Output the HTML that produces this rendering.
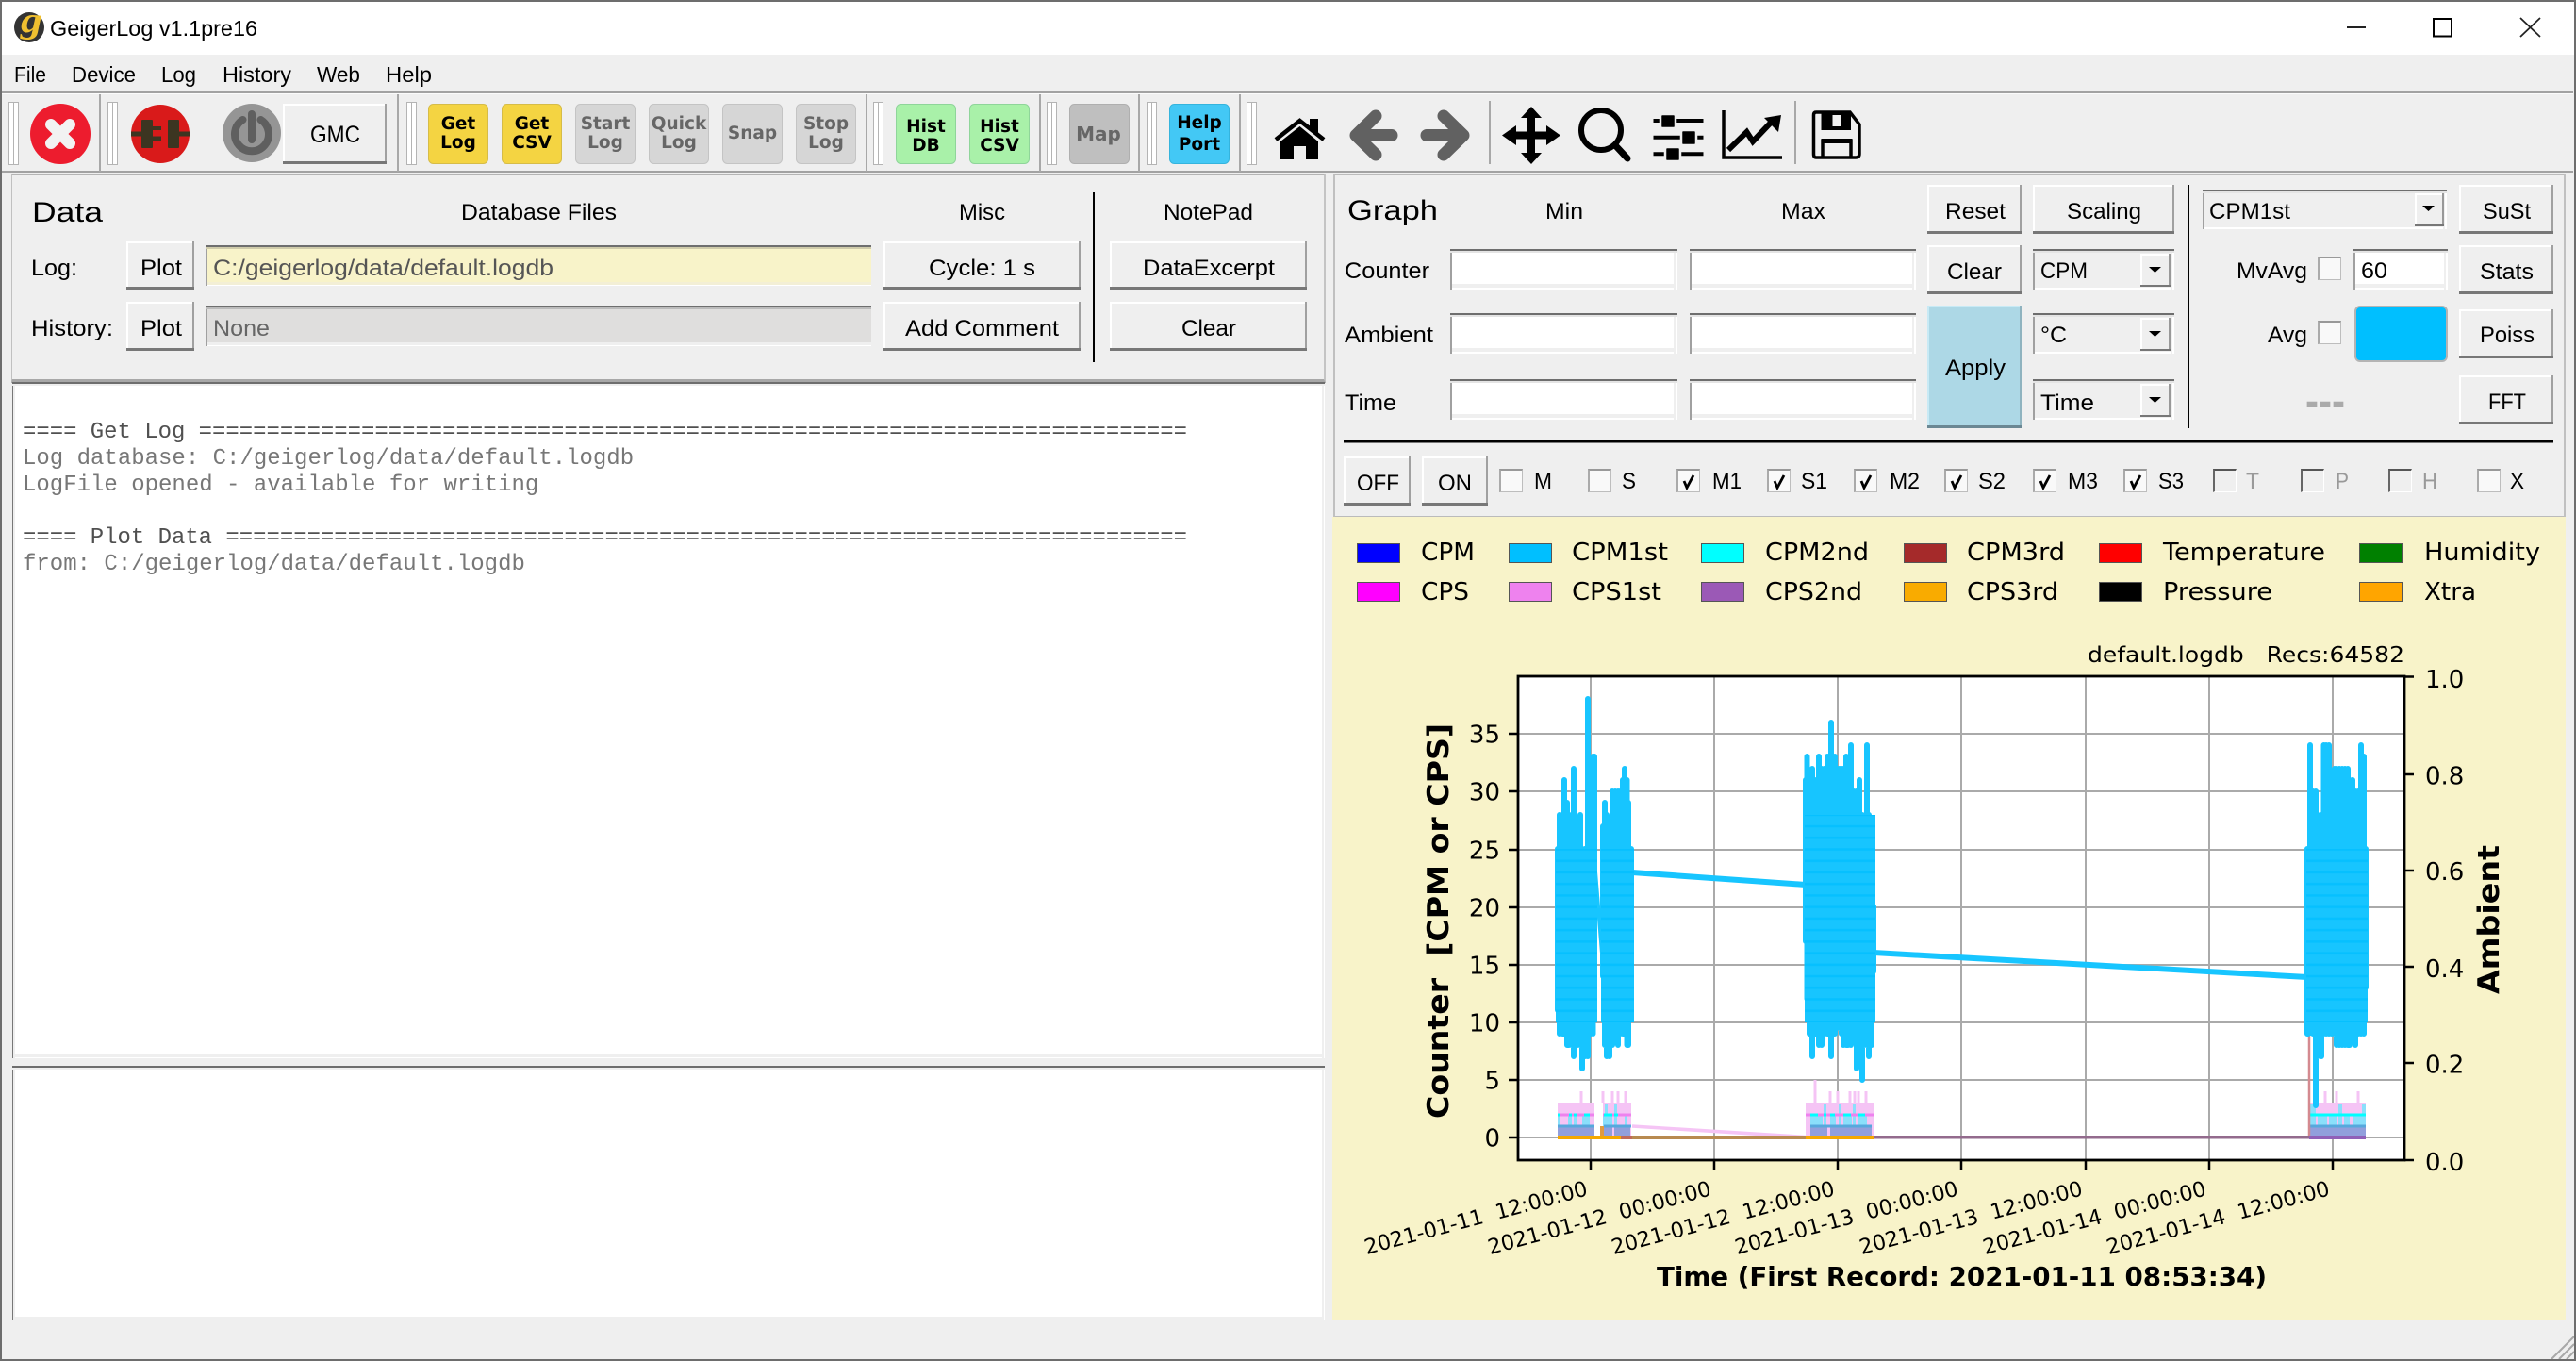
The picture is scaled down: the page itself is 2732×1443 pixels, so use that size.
<!DOCTYPE html>
<html><head><meta charset="utf-8"><title>GeigerLog v1.1pre16</title>
<style>
html,body{margin:0;padding:0;width:2732px;height:1443px;overflow:hidden;background:#efefef}
div{position:absolute;box-sizing:border-box}
.b{background:#efefef;box-shadow:inset 0 -3px 0 #777,inset -2px 0 0 #a0a0a0,inset 0 2px 0 #fff,inset 2px 0 0 #fff}
.i{background:#fff;box-shadow:inset 0 2px 0 #6e6e6e,inset 0 4px 0 #e4e4e4,inset 2px 0 0 #a0a0a0,inset -2px 0 0 #fff,inset -4px 0 0 #efefef,inset 0 -2px 0 #fff,inset 0 -6px 0 #efefef}
.k{background:#efefef}
.a{background:#efefef;box-shadow:inset 0 -2px 0 #777,inset -2px 0 0 #999,inset 0 2px 0 #fff,inset 2px 0 0 #fff}
.c{width:25px;height:25px;background:#f9f9f9;border:1px solid #bdbdbd;border-top:2px solid #999;border-left:2px solid #aaa}
.d{width:25px;height:25px;background:#efefef;border-top:2px solid #555;border-left:2px solid #666;border-right:1px solid #fff;border-bottom:1px solid #fff}
svg{position:absolute;left:0;top:0}
text{white-space:pre;font-family:"Liberation Sans",sans-serif;font-size:24px;fill:#000}
.m{font-family:"Liberation Mono",monospace;fill:#777}
.h{font-family:"Liberation Mono",monospace;fill:#505050}
.v{font-family:"DejaVu Sans",sans-serif;font-size:26px}
.w{font-family:"DejaVu Sans",sans-serif;font-weight:bold;font-size:18.5px;text-anchor:middle}
.g{fill:#666}
</style></head><body>

<!-- title bar -->
<div style="left:0;top:0;width:2732px;height:58px;background:#fff"></div>
<div style="left:0;top:97px;width:2729px;height:2px;background:#a2a2a2"></div>
<div style="left:0;top:99px;width:2729px;height:1px;background:#fbfbfb"></div>
<div style="left:0;top:181px;width:2729px;height:2px;background:#a2a2a2"></div>
<div class="b" style="left:300px;top:110px;width:110px;height:64px"></div>

<!-- data panel -->
<div style="left:12px;top:184px;width:1394px;height:222px;background:#efefef;border-top:2px solid #b4b4b4;border-left:1px solid #c0c0c0;border-right:2px solid #c4c4c4;border-bottom:4px solid #a8a8a8"></div>
<div class="b" style="left:134px;top:256px;width:72px;height:51px"></div>
<div class="b" style="left:134px;top:320px;width:72px;height:52px"></div>
<div class="i" style="left:218px;top:260px;width:706px;height:43px;background:#f8f3c9;box-shadow:inset 0 2px 0 #6e6e6e,inset 0 4px 0 #cfcbaa,inset 2px 0 0 #a0a0a0,inset 0 -1px 0 #fff,inset 0 -4px 0 #f3efd6"></div>
<div class="i" style="left:218px;top:324px;width:706px;height:43px;background:#dfdedd;box-shadow:inset 0 2px 0 #6e6e6e,inset 0 4px 0 #bbb,inset 2px 0 0 #a0a0a0,inset 0 -1px 0 #fff,inset 0 -4px 0 #efefef"></div>
<div class="b" style="left:937px;top:256px;width:209px;height:51px"></div>
<div class="b" style="left:937px;top:320px;width:209px;height:52px"></div>
<div class="b" style="left:1177px;top:256px;width:209px;height:51px"></div>
<div class="b" style="left:1177px;top:320px;width:209px;height:52px"></div>
<div style="left:1159px;top:204px;width:2px;height:180px;background:#000"></div>

<!-- log box -->
<div style="left:13px;top:405px;width:1392px;height:717px;background:#fff;box-shadow:inset 0 2px 0 #6e6e6e,inset 0 4px 0 #efefef,inset 1px 0 0 #777,inset 3px 0 0 #efefef,inset -1px 0 0 #fff,inset -3px 0 0 #efefef,inset 0 -1px 0 #fff,inset 0 -4px 0 #efefef"></div>
<!-- notepad -->
<div style="left:13px;top:1130px;width:1392px;height:270px;background:#fff;box-shadow:inset 0 2px 0 #6e6e6e,inset 0 4px 0 #efefef,inset 1px 0 0 #777,inset 3px 0 0 #efefef,inset -1px 0 0 #fff,inset -3px 0 0 #efefef,inset 0 -1px 0 #fff,inset 0 -4px 0 #efefef"></div>

<!-- graph panel -->
<div style="left:1414px;top:184px;width:1307px;height:365px;background:#efefef;border-top:2px solid #bbb;border-left:2px solid #c0c0c0;border-right:2px solid #c0c0c0;border-bottom:2px solid #bbb"></div>
<div class="b" style="left:2044px;top:196px;width:100px;height:52px"></div>
<div class="b" style="left:2156px;top:196px;width:150px;height:52px"></div>
<div class="b" style="left:2608px;top:196px;width:100px;height:52px"></div>
<div class="b" style="left:2044px;top:260px;width:100px;height:52px"></div>
<div class="b" style="left:2608px;top:260px;width:100px;height:52px"></div>
<div class="b" style="left:2044px;top:324px;width:100px;height:130px;background:#add8e6;box-shadow:inset 0 -3px 0 #6b8894,inset -2px 0 0 #8fb3bf,inset 0 2px 0 #c8eaf5,inset 2px 0 0 #c8eaf5"></div>
<div class="b" style="left:2608px;top:328px;width:100px;height:52px"></div>
<div class="b" style="left:2608px;top:398px;width:100px;height:52px"></div>
<div class="b" style="left:1425px;top:484px;width:71px;height:52px"></div>
<div class="b" style="left:1508px;top:484px;width:70px;height:52px"></div>

<div class="i" style="left:1538px;top:264px;width:241px;height:43px"></div>
<div class="i" style="left:1792px;top:264px;width:240px;height:43px"></div>
<div class="i" style="left:1538px;top:332px;width:241px;height:43px"></div>
<div class="i" style="left:1792px;top:332px;width:240px;height:43px"></div>
<div class="i" style="left:1538px;top:402px;width:241px;height:43px"></div>
<div class="i" style="left:1792px;top:402px;width:240px;height:43px"></div>
<div class="i" style="left:2496px;top:264px;width:100px;height:43px"></div>

<div class="i k" style="left:2336px;top:201px;width:259px;height:42px"></div>
<div class="i k" style="left:2156px;top:264px;width:150px;height:43px"></div>
<div class="i k" style="left:2156px;top:332px;width:150px;height:43px"></div>
<div class="i k" style="left:2156px;top:402px;width:150px;height:43px"></div>
<div class="a" style="left:2561px;top:205px;width:31px;height:35px"></div>
<div class="a" style="left:2270px;top:269px;width:32px;height:35px"></div>
<div class="a" style="left:2270px;top:337px;width:32px;height:35px"></div>
<div class="a" style="left:2270px;top:407px;width:32px;height:35px"></div>

<div class="c" style="left:2458px;top:272px"></div>
<div class="c" style="left:2458px;top:340px"></div>
<div style="left:2497px;top:324px;width:99px;height:60px;background:#00bfff;border:2px solid #b4b4b4;border-radius:6px"></div>

<div class="c" style="left:1590px;top:497px"></div>
<div class="c" style="left:1684px;top:497px"></div>
<div class="c" style="left:1778px;top:497px"></div>
<div class="c" style="left:1874px;top:497px"></div>
<div class="c" style="left:1966px;top:497px"></div>
<div class="c" style="left:2062px;top:497px"></div>
<div class="c" style="left:2156px;top:497px"></div>
<div class="c" style="left:2252px;top:497px"></div>
<div class="d" style="left:2347px;top:497px"></div>
<div class="d" style="left:2440px;top:497px"></div>
<div class="d" style="left:2533px;top:497px"></div>
<div class="c" style="left:2627px;top:497px"></div>

<!-- yellow plot area -->
<div style="left:1413px;top:548px;width:1308px;height:851px;background:#f8f3c9"></div>

<svg width="2732" height="1443" viewBox="0 0 2732 1443" xmlns="http://www.w3.org/2000/svg">
<defs>
<pattern id="st" patternUnits="userSpaceOnUse" width="10" height="12.23"><rect width="10" height="12.23" fill="#17c5ff"/><rect y="6.500" width="10" height="2.500" fill="#06c0ff"/></pattern>
</defs>

<!-- logo / title -->
<circle cx="31" cy="29" r="16" fill="#333"/>
<text x="22" y="34" textLength="23" lengthAdjust="spacingAndGlyphs" style="font-family:'Liberation Serif',serif;font-weight:bold;font-style:italic;font-size:38px;fill:#f0c030">g</text>
<text x="53" y="38" textLength="220" lengthAdjust="spacingAndGlyphs" style="font-size:23px">GeigerLog v1.1pre16</text>

<!-- window controls -->
<rect x="2489" y="28" width="20" height="2" fill="#222"/>
<rect x="2581" y="20" width="19" height="18.5" fill="none" stroke="#000" stroke-width="2"/>
<path d="M2673 19L2694 39M2694 19L2673 39" stroke="#222" stroke-width="1.8" fill="none"/>

<!-- menu -->
<g style="font-size:23px">
<text x="15" y="87" textLength="34" lengthAdjust="spacingAndGlyphs" style="font-size:23px">File</text>
<text x="76" y="87" textLength="68" lengthAdjust="spacingAndGlyphs" style="font-size:23px">Device</text>
<text x="171" y="87" textLength="37" lengthAdjust="spacingAndGlyphs" style="font-size:23px">Log</text>
<text x="236" y="87" textLength="73" lengthAdjust="spacingAndGlyphs" style="font-size:23px">History</text>
<text x="336" y="87" textLength="46" lengthAdjust="spacingAndGlyphs" style="font-size:23px">Web</text>
<text x="409" y="87" textLength="49" lengthAdjust="spacingAndGlyphs" style="font-size:23px">Help</text>
</g>

<!-- toolbar separators -->
<g fill="#a8a8a8">
<rect x="105" y="100" width="2" height="82"/><rect x="421" y="100" width="2" height="82"/><rect x="918" y="100" width="2" height="82"/><rect x="1102" y="100" width="2" height="82"/><rect x="1207" y="100" width="2" height="82"/><rect x="1314" y="100" width="2" height="82"/>
<rect x="1579" y="107" width="2" height="67"/><rect x="1903" y="107" width="2" height="67"/>
</g>
<!-- handles -->
<g>
<g id="hh"><rect x="9" y="108" width="11" height="67" fill="#b4b4b4"/><rect x="10" y="109" width="4" height="65" fill="#fff"/><rect x="15" y="109" width="4" height="65" fill="#fff"/></g>
<use href="#hh" x="105"/><use href="#hh" x="422"/><use href="#hh" x="917"/><use href="#hh" x="1101"/><use href="#hh" x="1207"/><use href="#hh" x="1313"/>
</g>

<!-- exit -->
<circle cx="64" cy="142" r="32" fill="#ed1c2e"/>
<path d="M54 132L74 152M74 132L54 152" stroke="#f2f2f2" stroke-width="12" stroke-linecap="round"/>
<!-- plug -->
<circle cx="170" cy="142" r="31" fill="#d91a1a"/>
<g fill="#3c3521"><rect x="150" y="127" width="12" height="30" rx="1"/><rect x="178" y="127" width="12" height="30" rx="1"/><rect x="139" y="139.5" width="11" height="5"/><rect x="190" y="139.5" width="11" height="5"/><rect x="162" y="134" width="9" height="4"/><rect x="162" y="144.5" width="9" height="4.5"/></g>
<!-- power -->
<circle cx="267" cy="141" r="31" fill="#959595"/>
<path d="M257.5 127A18 18 0 1 0 276.5 127" fill="none" stroke="#5f5f5f" stroke-width="8" stroke-linecap="round"/>
<path d="M267 121V148" stroke="#5f5f5f" stroke-width="8" stroke-linecap="round"/>
<text x="329" y="151" textLength="53" lengthAdjust="spacingAndGlyphs" style="font-size:25px">GMC</text>

<!-- toolbar buttons -->
<g stroke-width="1">
<rect x="454.500" y="110.500" width="63" height="63" rx="5" fill="#f4d442" stroke="#d6bc48"/>
<rect x="532.500" y="110.500" width="63" height="63" rx="5" fill="#f4d442" stroke="#d6bc48"/>
<rect x="610.500" y="110.500" width="63" height="63" rx="5" fill="#d6d6d6" stroke="#c4c4c4"/>
<rect x="688.500" y="110.500" width="63" height="63" rx="5" fill="#d6d6d6" stroke="#c4c4c4"/>
<rect x="766.500" y="110.500" width="63" height="63" rx="5" fill="#d6d6d6" stroke="#c4c4c4"/>
<rect x="844.500" y="110.500" width="63" height="63" rx="5" fill="#d6d6d6" stroke="#c4c4c4"/>
<rect x="950.500" y="110.500" width="63" height="63" rx="5" fill="#a9f1a9" stroke="#8fd59a"/>
<rect x="1028.500" y="110.500" width="63" height="63" rx="5" fill="#a9f1a9" stroke="#8fd59a"/>
<rect x="1134.500" y="110.500" width="63" height="63" rx="5" fill="#bfbfbf" stroke="#afafaf"/>
<rect x="1240.500" y="110.500" width="63" height="63" rx="5" fill="#43c8f5" stroke="#35b4dd"/>
</g>
<text class="w" x="486" y="137">Get</text><text class="w" x="486" y="157">Log</text>
<text class="w" x="564" y="137">Get</text><text class="w" x="564" y="157">CSV</text>
<text class="w g" x="642" y="137">Start</text><text class="w g" x="642" y="157">Log</text>
<text class="w g" x="720" y="137">Quick</text><text class="w g" x="720" y="157">Log</text>
<text class="w g" x="798" y="147">Snap</text>
<text class="w g" x="876" y="137">Stop</text><text class="w g" x="876" y="157">Log</text>
<text class="w" x="982" y="140">Hist</text><text class="w" x="982" y="160">DB</text>
<text class="w" x="1060" y="140">Hist</text><text class="w" x="1060" y="160">CSV</text>
<text class="w g" x="1165" y="149" style="font-size:20px">Map</text>
<text class="w" x="1272" y="136">Help</text><text class="w" x="1272" y="159">Port</text>

<!-- home -->
<path d="M1353 148L1378.500 128L1404 148" fill="none" stroke="#000" stroke-width="4.500"/>
<path d="M1389 126H1398V141L1389 134Z" fill="#000"/>
<path d="M1378.500 134L1398 150V169H1385V155H1372V169H1358V150Z" fill="#000"/>
<!-- arrows -->
<path d="M1459 123L1438 143.500L1459 164M1440 143.500H1476" fill="none" stroke="#616161" stroke-width="13" stroke-linecap="round" stroke-linejoin="round"/>
<path d="M1531 123L1552 143.500L1531 164M1550 143.500H1513" fill="none" stroke="#616161" stroke-width="13" stroke-linecap="round" stroke-linejoin="round"/>
<!-- move -->
<path d="M1620 125H1613L1624 113L1635 125H1628V139.500H1640V133L1655 143.500L1640 154V147.500H1628V162H1635L1624 174L1613 162H1620V147.500H1608V154L1593 143.500L1608 133V139.500H1620Z" fill="#000"/>
<!-- zoom -->
<circle cx="1698" cy="138" r="21" fill="none" stroke="#000" stroke-width="6"/>
<path d="M1713 154L1726 168" stroke="#000" stroke-width="7" stroke-linecap="round"/>
<!-- sliders -->
<path d="M1753.500 128H1806.500M1753.500 145.700H1806.500M1753.500 163.300H1806.500" stroke="#000" stroke-width="4"/>
<g fill="#000" stroke="#efefef" stroke-width="2.500"><rect x="1761" y="121" width="16" height="15" rx="2"/><rect x="1783" y="138" width="16" height="16" rx="2"/><rect x="1766" y="156" width="16" height="15" rx="2"/></g>
<!-- chart -->
<path d="M1828 117V167H1890" fill="none" stroke="#000" stroke-width="3.500"/>
<path d="M1833 159L1852.500 140L1859 150L1878 130" fill="none" stroke="#000" stroke-width="6"/>
<path d="M1889 122L1871 125L1886 140Z" fill="#000"/>
<!-- save -->
<path d="M1926 119H1962L1972 132V163Q1972 167 1968 167H1926Q1923.500 167 1923.500 163V122Q1923.500 119 1926 119Z" fill="none" stroke="#000" stroke-width="3.500"/>
<path d="M1931.500 120H1963V138H1931.500Z" fill="#000"/>
<rect x="1943.500" y="122" width="9" height="12" fill="#efefef"/>
<path d="M1933 167V149.500H1963V167" fill="none" stroke="#000" stroke-width="3.500"/>
<rect x="1931.500" y="147" width="33" height="5" fill="#000"/>

<!-- data panel text -->
<text x="34" y="235" textLength="75" lengthAdjust="spacingAndGlyphs" style="font-size:30px">Data</text>
<text x="489" y="233" textLength="165" lengthAdjust="spacingAndGlyphs">Database Files</text>
<text x="1017" y="233" textLength="49" lengthAdjust="spacingAndGlyphs">Misc</text>
<text x="1234" y="233" textLength="95" lengthAdjust="spacingAndGlyphs">NotePad</text>
<text x="33" y="292" textLength="49" lengthAdjust="spacingAndGlyphs">Log:</text>
<text x="33" y="356" textLength="87" lengthAdjust="spacingAndGlyphs">History:</text>
<text x="149" y="292" textLength="44" lengthAdjust="spacingAndGlyphs">Plot</text>
<text x="149" y="356" textLength="44" lengthAdjust="spacingAndGlyphs">Plot</text>
<text x="226" y="292" textLength="361" lengthAdjust="spacingAndGlyphs" style="fill:#555">C:/geigerlog/data/default.logdb</text>
<text x="226" y="356" textLength="60" lengthAdjust="spacingAndGlyphs" style="fill:#666">None</text>
<text x="985" y="292" textLength="113" lengthAdjust="spacingAndGlyphs">Cycle: 1 s</text>
<text x="960" y="356" textLength="163" lengthAdjust="spacingAndGlyphs">Add Comment</text>
<text x="1212" y="292" textLength="140" lengthAdjust="spacingAndGlyphs">DataExcerpt</text>
<text x="1253" y="356" textLength="58" lengthAdjust="spacingAndGlyphs">Clear</text>

<!-- log text -->
<text class="h" x="24" y="464" textLength="1235" lengthAdjust="spacingAndGlyphs">==== Get Log =========================================================================</text>
<text class="m" x="24" y="492">Log database: C:/geigerlog/data/default.logdb</text>
<text class="m" x="24" y="520">LogFile opened - available for writing</text>
<text class="h" x="24" y="576" textLength="1235" lengthAdjust="spacingAndGlyphs">==== Plot Data =======================================================================</text>
<text class="m" x="24" y="604">from: C:/geigerlog/data/default.logdb</text>

<!-- graph panel text -->
<text x="1429" y="233" textLength="96" lengthAdjust="spacingAndGlyphs" style="font-size:30px">Graph</text>
<text x="1639" y="232" textLength="40" lengthAdjust="spacingAndGlyphs">Min</text>
<text x="1889" y="232" textLength="47" lengthAdjust="spacingAndGlyphs">Max</text>
<text x="2063" y="232" textLength="64" lengthAdjust="spacingAndGlyphs">Reset</text>
<text x="2192" y="232" textLength="79" lengthAdjust="spacingAndGlyphs">Scaling</text>
<text x="2343" y="232" textLength="86" lengthAdjust="spacingAndGlyphs">CPM1st</text>
<text x="2633" y="232" textLength="51" lengthAdjust="spacingAndGlyphs">SuSt</text>
<text x="1426" y="295" textLength="90" lengthAdjust="spacingAndGlyphs">Counter</text>
<text x="2065" y="296" textLength="58" lengthAdjust="spacingAndGlyphs">Clear</text>
<text x="2164" y="295" textLength="50" lengthAdjust="spacingAndGlyphs">CPM</text>
<text x="2372" y="295" textLength="75" lengthAdjust="spacingAndGlyphs">MvAvg</text>
<text x="2504" y="295" textLength="28" lengthAdjust="spacingAndGlyphs">60</text>
<text x="2630" y="296" textLength="57" lengthAdjust="spacingAndGlyphs">Stats</text>
<text x="1426" y="363" textLength="94" lengthAdjust="spacingAndGlyphs">Ambient</text>
<text x="2164" y="363" textLength="28" lengthAdjust="spacingAndGlyphs">°C</text>
<text x="2405" y="363" textLength="42" lengthAdjust="spacingAndGlyphs">Avg</text>
<text x="2630" y="363" textLength="58" lengthAdjust="spacingAndGlyphs">Poiss</text>
<text x="2063" y="398" textLength="64" lengthAdjust="spacingAndGlyphs">Apply</text>
<text x="1426" y="435" textLength="55" lengthAdjust="spacingAndGlyphs">Time</text>
<text x="2164" y="435" textLength="57" lengthAdjust="spacingAndGlyphs">Time</text>
<text x="2639" y="434" textLength="40" lengthAdjust="spacingAndGlyphs">FFT</text>
<text x="2445" y="441" textLength="42" lengthAdjust="spacingAndGlyphs" style="font-size:48px;font-weight:bold;fill:#aaa">---</text>
<text x="1439" y="520" textLength="45" lengthAdjust="spacingAndGlyphs">OFF</text>
<text x="1525" y="520" textLength="36" lengthAdjust="spacingAndGlyphs">ON</text>
<text x="1627" y="518" textLength="19" lengthAdjust="spacingAndGlyphs">M</text>
<text x="1720" y="518" textLength="15" lengthAdjust="spacingAndGlyphs">S</text>
<text x="1816" y="518" textLength="31" lengthAdjust="spacingAndGlyphs">M1</text>
<text x="1910" y="518" textLength="28" lengthAdjust="spacingAndGlyphs">S1</text>
<text x="2004" y="518" textLength="32" lengthAdjust="spacingAndGlyphs">M2</text>
<text x="2098" y="518" textLength="29" lengthAdjust="spacingAndGlyphs">S2</text>
<text x="2193" y="518" textLength="32" lengthAdjust="spacingAndGlyphs">M3</text>
<text x="2289" y="518" textLength="27" lengthAdjust="spacingAndGlyphs">S3</text>
<text x="2382" y="518" textLength="14" lengthAdjust="spacingAndGlyphs" style="fill:#999">T</text>
<text x="2477" y="518" textLength="14" lengthAdjust="spacingAndGlyphs" style="fill:#999">P</text>
<text x="2569" y="518" textLength="16" lengthAdjust="spacingAndGlyphs" style="fill:#999">H</text>
<text x="2662" y="518" textLength="15" lengthAdjust="spacingAndGlyphs">X</text>
<!-- checks -->
<g fill="none" stroke="#000" stroke-width="2.800">
<path d="M1786 510L1789 517L1796 504"/><path d="M1882 510L1885 517L1892 504"/><path d="M1974 510L1977 517L1984 504"/><path d="M2070 510L2073 517L2080 504"/><path d="M2164 510L2167 517L2174 504"/><path d="M2260 510L2263 517L2270 504"/>
</g>
<!-- combo arrows -->
<g fill="#000"><path d="M2569 218H2582L2575.500 224Z"/><path d="M2279 283H2292L2285.500 289Z"/><path d="M2279 351H2292L2285.500 357Z"/><path d="M2279 421H2292L2285.500 427Z"/></g>
<!-- lines -->
<rect x="2320" y="196" width="2" height="258" fill="#000"/>
<rect x="1425" y="467" width="1283" height="2.500" fill="#000"/>

<!-- legend -->
<g stroke-width="1" stroke="#555">
<rect x="1439.500" y="576.500" width="45" height="20" fill="#0000ff"/><rect x="1600.500" y="576.500" width="45" height="20" fill="#00bfff"/><rect x="1804.500" y="576.500" width="45" height="20" fill="#00ffff"/><rect x="2019.500" y="576.500" width="45" height="20" fill="#a52a2a"/><rect x="2226.500" y="576.500" width="45" height="20" fill="#ff0000"/><rect x="2502.500" y="576.500" width="45" height="20" fill="#008000"/>
<rect x="1439.500" y="617.500" width="45" height="20" fill="#ff00ff"/><rect x="1600.500" y="617.500" width="45" height="20" fill="#ee82ee"/><rect x="1804.500" y="617.500" width="45" height="20" fill="#9b59b6"/><rect x="2019.500" y="617.500" width="45" height="20" fill="#f9ab00"/><rect x="2226.500" y="617.500" width="45" height="20" fill="#000"/><rect x="2502.500" y="617.500" width="45" height="20" fill="#ffa500"/>
</g>
<text class="v" x="1507" y="594" textLength="57" lengthAdjust="spacingAndGlyphs">CPM</text>
<text class="v" x="1667" y="594" textLength="102" lengthAdjust="spacingAndGlyphs">CPM1st</text>
<text class="v" x="1872" y="594" textLength="110" lengthAdjust="spacingAndGlyphs">CPM2nd</text>
<text class="v" x="2086" y="594" textLength="104" lengthAdjust="spacingAndGlyphs">CPM3rd</text>
<text class="v" x="2294" y="594" textLength="172" lengthAdjust="spacingAndGlyphs">Temperature</text>
<text class="v" x="2571" y="594" textLength="123" lengthAdjust="spacingAndGlyphs">Humidity</text>
<text class="v" x="1507" y="636" textLength="51" lengthAdjust="spacingAndGlyphs">CPS</text>
<text class="v" x="1667" y="636" textLength="95" lengthAdjust="spacingAndGlyphs">CPS1st</text>
<text class="v" x="1872" y="636" textLength="103" lengthAdjust="spacingAndGlyphs">CPS2nd</text>
<text class="v" x="2086" y="636" textLength="97" lengthAdjust="spacingAndGlyphs">CPS3rd</text>
<text class="v" x="2294" y="636" textLength="116" lengthAdjust="spacingAndGlyphs">Pressure</text>
<text class="v" x="2571" y="636" textLength="55" lengthAdjust="spacingAndGlyphs">Xtra</text>

<text class="v" x="2214" y="702" textLength="336" lengthAdjust="spacingAndGlyphs" style="font-size:23px">default.logdb   Recs:64582</text>

<!-- plot -->
<rect x="1610" y="717" width="940" height="513" fill="#fff"/>
<g stroke="#aaa" stroke-width="2">
<path d="M1610 778H2550M1610 839H2550M1610 901H2550M1610 962H2550M1610 1023H2550M1610 1084H2550M1610 1145H2550M1610 1206H2550"/>
<path d="M1687 717V1230M1818 717V1230M1949 717V1230M2080 717V1230M2212 717V1230M2343 717V1230M2474 717V1230"/>
</g>

<!-- low series -->
<g>
<rect x="1652" y="1169" width="39" height="37" fill="#f5c4f5"/><rect x="1700" y="1169" width="30" height="37" fill="#f5c4f5"/><rect x="1915" y="1169" width="72" height="37" fill="#f5c4f5"/><rect x="2449" y="1169" width="60" height="37" fill="#f5c4f5"/>
<path d="M1731 1194L1915 1205.500" stroke="#f5c4f5" stroke-width="3.500"/>
<path d="M1677 1169V1157M1700 1169V1157M1710 1169V1157M1716 1169V1157M1724 1169V1157M1925 1169V1145M1941 1169V1157M1949 1169V1157M1962 1169V1157M1967 1169V1157M1971 1169V1157M1979 1169V1157M2466 1169V1157M2478 1169V1157M2501 1169V1157" stroke="#f5c4f5" stroke-width="3"/>
<g fill="#8adffb">
<rect x="1652" y="1182" width="3" height="12"/><rect x="1663" y="1182" width="4" height="12"/><rect x="1669" y="1182" width="3" height="12"/><rect x="1678" y="1182" width="8" height="12"/>
<rect x="1700" y="1182" width="10" height="12"/><rect x="1702" y="1170" width="3" height="12"/><rect x="1712" y="1170" width="3" height="24"/><rect x="1723" y="1182" width="3" height="12"/>
<rect x="1920" y="1182" width="13" height="12"/><rect x="1934" y="1170" width="3" height="24"/><rect x="1941" y="1182" width="6" height="12"/><rect x="1950" y="1170" width="3" height="24"/><rect x="1955" y="1182" width="9" height="12"/><rect x="1965" y="1170" width="3" height="24"/><rect x="1970" y="1182" width="10" height="12"/>
<rect x="2449" y="1170" width="7" height="24"/><rect x="2458" y="1182" width="10" height="12"/><rect x="2470" y="1182" width="8" height="12"/><rect x="2480" y="1170" width="4" height="24"/><rect x="2486" y="1182" width="6" height="12"/><rect x="2495" y="1182" width="14" height="12"/><rect x="2505" y="1170" width="4" height="12"/>
</g>
<rect x="1652" y="1180.500" width="39" height="3" fill="#ee82ee"/><rect x="1700" y="1180.500" width="30" height="3" fill="#ee82ee"/><rect x="1915" y="1180.500" width="72" height="3" fill="#ee82ee"/>
<g fill="#00ffff"><rect x="1652" y="1180.500" width="3" height="3"/><rect x="1664" y="1180.500" width="3" height="3"/><rect x="1669" y="1180.500" width="3" height="3"/><rect x="1680" y="1180.500" width="6" height="3"/><rect x="1701" y="1180.500" width="9" height="3"/><rect x="1712" y="1180.500" width="4" height="3"/><rect x="1920" y="1180.500" width="8" height="3"/><rect x="1934" y="1180.500" width="3" height="3"/><rect x="1941" y="1180.500" width="5" height="3"/><rect x="1955" y="1180.500" width="8" height="3"/><rect x="1970" y="1180.500" width="8" height="3"/><rect x="2449" y="1180.500" width="60" height="3"/></g>
<g fill="#919fdc"><rect x="1652" y="1194" width="20" height="12"/><rect x="1673" y="1194" width="18" height="12"/><rect x="1701" y="1194" width="9" height="12"/><rect x="1712" y="1194" width="17" height="12"/><rect x="1920" y="1194" width="18" height="12"/><rect x="1941" y="1194" width="44" height="12"/><rect x="2449" y="1194" width="60" height="13"/></g>
<g fill="#57a8dd"><rect x="1652" y="1192.500" width="39" height="3"/><rect x="1701" y="1192.500" width="29" height="3"/><rect x="1920" y="1192.500" width="65" height="3"/><rect x="2449" y="1192.500" width="60" height="3"/></g>
<path d="M2449 1096V1206" stroke="#d48a90" stroke-width="2.500"/>
<rect x="1697" y="1194" width="4" height="12" fill="#e09a40"/>
<rect x="1731" y="1204" width="184" height="4" fill="#b88a50"/>
<rect x="1719" y="1204" width="12" height="4" fill="#c06a5a"/>
<rect x="1652" y="1204" width="67" height="4" fill="#f5a800"/>
<rect x="1915" y="1204" width="72" height="4" fill="#f5a800"/>
<rect x="1987" y="1204" width="462" height="3.500" fill="#936b8d"/>
<rect x="2449" y="1204" width="60" height="4" fill="#9060b8"/>
</g>

<!-- CPM1st -->
<g fill="none" stroke="#17c5ff" stroke-linecap="round">
<path stroke-width="6" stroke-linecap="butt" d="M1731 925L1915 938M1987 1010L2447 1036"/>
<path stroke-width="4" d="M1691 912L1700 1023"/>
<path stroke-width="6" d="M1652 900V1071M1654 864V1096M1657 864V1096M1659 827V1096M1662 851V1108M1664 864V1108M1667 864V1108M1669 815V1120M1671 900V1108M1673 900V1108M1676 864V1108M1678 900V1133M1681 900V1120M1684 741V1120M1687 900V1096M1689.500 802V1096M1691 802V1047
M1700 876V1035M1702 851V1108M1704 864V1120M1707 876V1120M1710 839V1108M1713 839V1096M1716 839V1108M1718.500 839V1096M1721 827V1096M1723 815V1096M1725.500 827V1108M1727 851V1108M1729 900V1071M1730 900V1035
M1915 827V998M1916.500 802V1059M1919 864V1096M1922 815V1120M1925 827V1096M1927 840V1090M1929 802V1108M1932 815V1108M1935 815V1096M1938 802V1096M1940 815V1090M1942 766V1120M1944 815V1090M1946 802V1096M1949 815V1084M1951 815V1090M1953 815V1096M1955 815V1108M1958 802V1108M1960 839V1108M1963 790V1108M1966 839V1096M1969 839V1133M1972 827V1096M1975 864V1145M1977 900V1108M1980 790V1108M1982 864V1120M1985 925V1108M1987 961V1030
M2447 900V1096M2448 900V1096M2450 790V1084M2453 839V1096M2456 839V1172M2458 864V1120M2460 880V1100M2462 864V1120M2464.500 790V1096M2467 790V1096M2470 790V1096M2473 864V1096M2476 815V1096M2478 815V1108M2481 815V1108M2484 815V1108M2487 815V1108M2490 815V1108M2492 827V1108M2495 827V1096M2498 839V1108M2501 839V1096M2504 790V1096M2507 802V1096M2509 900V1047"/>
</g>
<g fill="url(#st)"><rect x="1650" y="900" width="44" height="184"/><rect x="1698" y="900" width="35" height="184"/><rect x="1914" y="864" width="75" height="220"/><rect x="2446" y="900" width="65" height="184"/></g>

<!-- spines & ticks -->
<rect x="1610" y="717" width="940" height="513" fill="none" stroke="#000" stroke-width="2.800"/>
<g stroke="#000" stroke-width="2.500">
<path d="M1600 778H1610M1600 839H1610M1600 901H1610M1600 962H1610M1600 1023H1610M1600 1084H1610M1600 1145H1610M1600 1206H1610"/>
<path d="M2550 717.500H2560M2550 821H2560M2550 923H2560M2550 1025H2560M2550 1127H2560M2550 1230H2560"/>
<path d="M1687 1230V1240M1818 1230V1240M1949 1230V1240M2080 1230V1240M2212 1230V1240M2343 1230V1240M2474 1230V1240"/>
</g>
<g class="v" style="text-anchor:end">
<text class="v" x="1591" y="787.500" text-anchor="end">35</text><text class="v" x="1591" y="848.500" text-anchor="end">30</text><text class="v" x="1591" y="910.500" text-anchor="end">25</text><text class="v" x="1591" y="971.500" text-anchor="end">20</text><text class="v" x="1591" y="1032.500" text-anchor="end">15</text><text class="v" x="1591" y="1093.500" text-anchor="end">10</text><text class="v" x="1591" y="1154.500" text-anchor="end">5</text><text class="v" x="1591" y="1215.500" text-anchor="end">0</text>
</g>
<text class="v" x="2572" y="729">1.0</text><text class="v" x="2572" y="831.500">0.8</text><text class="v" x="2572" y="933">0.6</text><text class="v" x="2572" y="1036">0.4</text><text class="v" x="2572" y="1137.500">0.2</text><text class="v" x="2572" y="1241">0.0</text>

<text class="v" transform="translate(1536,1186) rotate(-90)" textLength="419" lengthAdjust="spacingAndGlyphs" style="font-weight:bold;font-size:31px">Counter  [CPM or CPS]</text>
<text class="v" transform="translate(2650,1054) rotate(-90)" textLength="158" lengthAdjust="spacingAndGlyphs" style="font-weight:bold;font-size:31px">Ambient</text>

<g>
<text class="v" transform="translate(1685,1267) rotate(-15)" text-anchor="end" style="font-size:22.3px">2021-01-11  12:00:00</text>
<text class="v" transform="translate(1816,1267) rotate(-15)" text-anchor="end" style="font-size:22.3px">2021-01-12  00:00:00</text>
<text class="v" transform="translate(1947,1267) rotate(-15)" text-anchor="end" style="font-size:22.3px">2021-01-12  12:00:00</text>
<text class="v" transform="translate(2078,1267) rotate(-15)" text-anchor="end" style="font-size:22.3px">2021-01-13  00:00:00</text>
<text class="v" transform="translate(2210,1267) rotate(-15)" text-anchor="end" style="font-size:22.3px">2021-01-13  12:00:00</text>
<text class="v" transform="translate(2341,1267) rotate(-15)" text-anchor="end" style="font-size:22.3px">2021-01-14  00:00:00</text>
<text class="v" transform="translate(2472,1267) rotate(-15)" text-anchor="end" style="font-size:22.3px">2021-01-14  12:00:00</text>
</g>
<text class="v" x="1757" y="1363" textLength="647" lengthAdjust="spacingAndGlyphs" style="font-weight:bold;font-size:28px">Time (First Record: 2021-01-11 08:53:34)</text>

<!-- resize grip -->
<path d="M2706 1441L2730 1417M2714 1441L2730 1425M2722 1441L2730 1433" stroke="#a8a8a8" stroke-width="2" fill="none"/>

<!-- window border -->
<rect x="0" y="0" width="2732" height="2" fill="#6d6d6d"/>
<rect x="0" y="0" width="2" height="1443" fill="#6d6d6d"/>
<rect x="2730" y="0" width="2" height="1443" fill="#6d6d6d"/>
<rect x="0" y="1441" width="2732" height="2" fill="#6d6d6d"/>
</svg>
</body></html>
